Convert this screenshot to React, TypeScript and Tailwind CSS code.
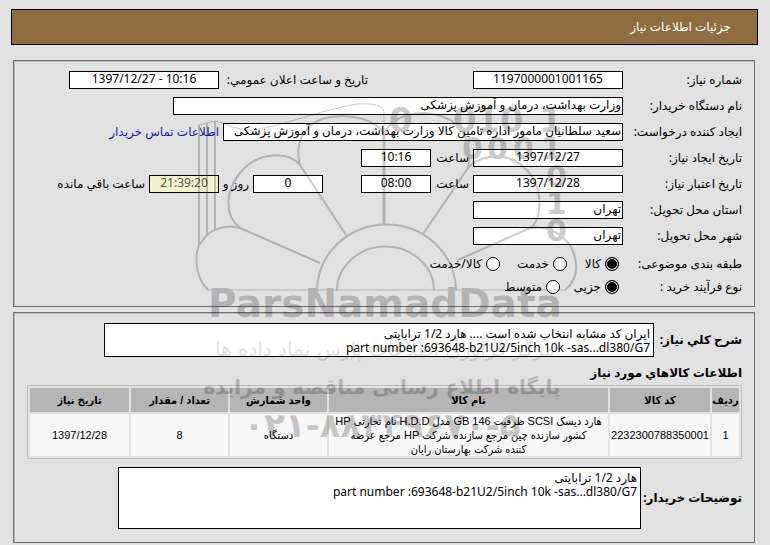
import type { ReactNode } from "react";

const boxClass =
  "h-[18px] shrink-0 border border-black px-px pb-[3px] text-[12px] leading-4 outline-none";

function Box({
  id,
  value,
  width,
  center = true,
  tone = "bg-white",
}: {
  id: string;
  value: string;
  width: string;
  center?: boolean;
  tone?: string;
}) {
  return (
    <input
      id={id}
      readOnly
      defaultValue={value}
      className={`${boxClass} ${width} ${center ? "text-center" : "text-right"} ${tone}`}
    />
  );
}

function Row({ label, htmlFor, children }: { label: string; htmlFor: string; children: ReactNode }) {
  return (
    <div className="flex h-[18px] items-center">
      <label htmlFor={htmlFor} className="w-[119px] shrink-0 whitespace-nowrap">
        {label}
      </label>
      {children}
    </div>
  );
}

function Option({
  name,
  label,
  width,
  checked = false,
}: {
  name: string;
  label: string;
  width: string;
  checked?: boolean;
}) {
  return (
    <label className={`flex shrink-0 items-center gap-1 whitespace-nowrap ${width}`}>
      <input
        type="radio"
        name={name}
        defaultChecked={checked}
        className="size-[14px] shrink-0 appearance-none rounded-full border border-black bg-white checked:bg-black checked:shadow-[inset_0_0_0_1px_white]"
      />
      {label}
    </label>
  );
}

function Watermark() {
  return (
    <svg
      aria-hidden="true"
      width="770"
      height="470"
      viewBox="0 0 770 470"
      direction="ltr"
      className="pointer-events-none absolute top-0 left-1/2 -translate-x-1/2 opacity-20 [direction:ltr]"
    >
      <g fill="none" stroke="#000" strokeWidth="2">
        <path d="M317 291A69 66 0 0 1 456 291M337 291A48 44 0 0 1 434 291" />
        <path d="M208 290H565" strokeWidth="1" />
        <path d="M320 263L240 228C222 224 208 231 203 240C193 250 194 276 208 290" />
        <path d="M346 235L300 165C288 151 258 151 240 173C226 190 223 214 240 228" />
        <path d="M300 165C294 145 303 125 325 118C350 113 376 119 384 134" />
        <path d="M384 225V134" strokeWidth="3" />
        <path d="M384 134V112C383 105 372 103 357 104C325 109 282 126 253 130C235 131 222 121 214 121L199 125" strokeWidth="1" />
        <path d="M199 125V245M207 123V236M215 121V229" />
        <path d="M423 234L468 168C472 150 467 130 450 120C425 107 394 113 384 134" />
        <path d="M468 168C478 156 500 153 515 161C535 172 541 192 539 210C538 220 535 225 530 228L458 260" />
        <path d="M530 228C550 225 569 237 574 254C579 270 575 282 565 290" />
      </g>
      <g fill="#000" className="font-['DejaVu_Sans'] font-bold">
        <text y="132" fontSize="34" x="389 453 476 500 539">00101</text>
        <text y="159" fontSize="30" x="462 487 513 541">0001</text>
        <text fontSize="30" x="546 546 546" y="187 214 241">010</text>
        <text x="385" y="317" fontSize="39" textAnchor="middle">ParsNamadData</text>
        <text
          x="385"
          y="356"
          fontSize="20"
          fillOpacity="0.6"
          textAnchor="middle"
          className="font-normal [direction:rtl]"
        >
          مرکز فرآوری اطلاعات پارس نماد داده ها
        </text>
        <text x="382" y="394" fontSize="20" textAnchor="middle" className="[direction:rtl]">
          پایگاه اطلاع رسانی مناقصه و مزایده
        </text>
        <text x="382" y="437" fontSize="34" textAnchor="middle">
          ۰۲۱-۸۸۳۴۹۶۷۰-۵
        </text>
      </g>
    </svg>
  );
}

const panel = "mr-[15px] ml-[13px] border border-[#707070] shadow-[inset_1px_1px_0_#bbb]";
const head = "h-6 bg-[#b5b5b5] p-0 text-center font-bold whitespace-nowrap";
const cell = "h-[42px] bg-[#f7f7f7] p-0 text-center leading-[14px] whitespace-nowrap";
const area =
  "resize-none overflow-hidden border border-black bg-white px-[3px] pt-[3px] text-[12px] leading-[14px] outline-none";

export default function App() {
  return (
    <main
      dir="rtl"
      lang="fa"
      className="relative min-h-screen overflow-hidden bg-[#e1e1e1] pt-[9px] pb-[2px] font-['Noto_Sans','DejaVu_Sans',sans-serif] text-[12px] leading-4 text-black"
    >
      <h1 className="mr-3 ml-[11px] flex h-9 items-center border border-black bg-[#8f6d40] pr-[26px] text-[12px] text-white">
        جزئیات اطلاعات نیاز
      </h1>

      <section className={`${panel} mt-[15px] h-[247px] pt-[10px] pr-3`}>
        <div className="flex flex-col gap-2">
          <Row label="شماره نیاز:" htmlFor="number">
            <Box id="number" value="1197000001001165" width="w-[150px]" />
            <label htmlFor="announced" className="mr-[105px] w-[149px] shrink-0 whitespace-nowrap">
              تاریخ و ساعت اعلان عمومي:
            </label>
            <Box id="announced" value="10:16 - 1397/12/27" width="w-[150px]" />
          </Row>
          <Row label="نام دستگاه خریدار:" htmlFor="buyer">
            <Box id="buyer" value="وزارت بهداشت، درمان و آموزش پزشکی" width="w-[450px]" center={false} />
          </Row>
          <Row label="ایجاد کننده درخواست:" htmlFor="creator">
            <Box
              id="creator"
              value="سعید سلطانیان مامور اداره تامین کالا وزارت بهداشت، درمان و آموزش پزشکی"
              width="w-[400px]"
              center={false}
            />
            <a href="#contact" className="pr-1 whitespace-nowrap text-[#1a1ab0]">
              اطلاعات تماس خریدار
            </a>
          </Row>
          <Row label="تاریخ ایجاد نیاز:" htmlFor="created">
            <Box id="created" value="1397/12/27" width="w-[150px]" />
            <label htmlFor="createdTime" className="w-[42px] shrink-0 pr-1">
              ساعت
            </label>
            <Box id="createdTime" value="10:16" width="w-[70px]" />
          </Row>
          <Row label="تاریخ اعتبار نیاز:" htmlFor="expires">
            <Box id="expires" value="1397/12/28" width="w-[150px]" />
            <label htmlFor="expiresTime" className="w-[42px] shrink-0 pr-1">
              ساعت
            </label>
            <Box id="expiresTime" value="08:00" width="w-[70px]" />
            <span className="w-[38px] shrink-0" />
            <Box id="days" value="0" width="w-[70px]" />
            <label htmlFor="days" className="w-[34px] shrink-0 pr-1 whitespace-nowrap">
              روز و
            </label>
            <Box id="remaining" value="21:39:20" width="w-[70px]" tone="bg-[#f3f3cd] text-[#555]" />
            <label htmlFor="remaining" className="pr-1 whitespace-nowrap">
              ساعت باقي مانده
            </label>
          </Row>
          <Row label="استان محل تحویل:" htmlFor="province">
            <Box id="province" value="تهران" width="w-[150px]" center={false} />
          </Row>
          <Row label="شهر محل تحویل:" htmlFor="city">
            <Box id="city" value="تهران" width="w-[150px]" center={false} />
          </Row>
        </div>

        <div className="mt-[7px] flex flex-col">
          <div role="radiogroup" aria-label="طبقه بندی موضوعی" className="flex h-[23px] items-center">
            <span className="w-[123px] shrink-0 whitespace-nowrap">طبقه بندی موضوعی:</span>
            <Option name="subject" label="کالا" width="w-[52px]" checked />
            <Option name="subject" label="خدمت" width="w-[67px]" />
            <Option name="subject" label="کالا/خدمت" width="w-[80px]" />
          </div>
          <div role="radiogroup" aria-label="نوع فرآیند خرید" className="flex h-[23px] items-center">
            <span className="w-[123px] shrink-0 whitespace-nowrap">نوع فرآیند خرید :</span>
            <Option name="process" label="جزیی" width="w-[59px]" checked />
            <Option name="process" label="متوسط" width="w-[67px]" />
          </div>
        </div>
      </section>

      <section className={`${panel} mt-[5px] pt-[10px] pr-3 pb-[13px] pl-[13px]`}>
        <div className="flex items-center">
          <label htmlFor="summary" className="w-[88px] shrink-0 text-[12px] font-bold whitespace-nowrap">
            شرح کلي نیاز:
          </label>
          <textarea
            id="summary"
            readOnly
            className={`${area} h-[34px] w-[550px]`}
            defaultValue={"ایران کد مشابه انتخاب شده است .... هارد 1/2 ترابایتی\npart number :693648-b21U2/5inch 10k -sas...dl380/G7"}
          />
        </div>

        <h2 className="mt-2 mb-1 text-[12px] font-bold">اطلاعات کالاهاي مورد نیاز</h2>

        <table className="w-full table-fixed border-separate border-spacing-[2px] border border-[#bdbdbd] font-['Liberation_Sans','DejaVu_Sans_Condensed',sans-serif] text-[11px]">
          <colgroup>
            <col className="w-[27px]" />
            <col className="w-[100px]" />
            <col />
            <col className="w-[97px]" />
            <col className="w-[97px]" />
            <col className="w-[99px]" />
          </colgroup>
          <thead>
            <tr>
              <th className={head}>ردیف</th>
              <th className={head}>کد کالا</th>
              <th className={head}>نام کالا</th>
              <th className={head}>واحد شمارش</th>
              <th className={head}>تعداد / مقدار</th>
              <th className={head}>تاریخ نیاز</th>
            </tr>
          </thead>
          <tbody>
            <tr>
              <td className={cell}>1</td>
              <td className={cell}>2232300788350001</td>
              <td className={cell}>
                هارد دیسک SCSI ظرفیت 146 GB مدل H.D.D نام تجارتی HP
                <br />
                کشور سازنده چین مرجع سازنده شرکت HP مرجع عرضه
                <br />
                کننده شرکت بهارستان رایان
              </td>
              <td className={cell}>دستگاه</td>
              <td className={cell}>8</td>
              <td className={cell}>1397/12/28</td>
            </tr>
          </tbody>
        </table>

        <div className="mt-2 flex items-center">
          <label htmlFor="notes" className="w-[101px] shrink-0 text-[12px] font-bold whitespace-nowrap">
            توضیحات خریدار:
          </label>
          <textarea
            id="notes"
            readOnly
            className={`${area} h-[62px] w-[523px]`}
            defaultValue={"هارد 1/2 ترابایتی\npart number :693648-b21U2/5inch 10k -sas...dl380/G7"}
          />
        </div>
      </section>
      <Watermark />
    </main>
  );
}
